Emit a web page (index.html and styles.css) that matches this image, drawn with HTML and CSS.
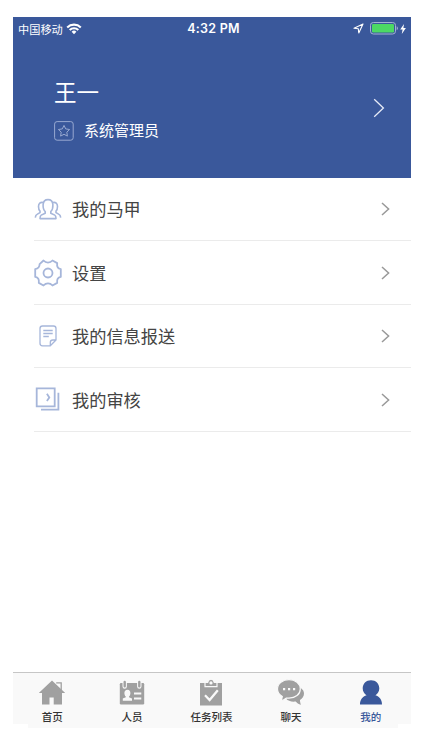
FILE: index.html
```html
<!DOCTYPE html>
<html lang="zh-CN">
<head>
<meta charset="utf-8">
<title>我的</title>
<link rel="stylesheet" href="styles.css">
</head>
<body>
<div class="phone">
	<div class="header">
		<div class="status">
			<div class="carrier">
				<span>中国移动</span>
				<svg class="wifi" width="16" height="12" viewBox="0 0 16 12" fill="none" stroke="#fff" stroke-width="2.1">
					<path d="M1.2 4.4a9.7 9.7 0 0 1 13.6 0M3.7 7a6.1 6.1 0 0 1 8.6 0"/>
					<path d="M8 11.2L5.6 8.8a3.4 3.4 0 0 1 4.8 0z" fill="#fff" stroke="none"/>
				</svg>
			</div>
			<div class="time">4:32 PM</div>
			<div class="power">
				<svg width="11" height="11" viewBox="0 0 11 11" fill="none" stroke="#fff" stroke-width="1.1" stroke-linejoin="round"><path d="M10 1L1 5.2l4.3.5.5 4.3z"/></svg>
				<svg class="battery" width="28" height="13" viewBox="0 0 28 13">
					<rect x=".5" y=".5" width="25" height="11.5" rx="2.8" fill="none" stroke="#a3b1d2"/>
					<rect x="2" y="2" width="22" height="8.5" rx="1.3" fill="#4cd964"/>
					<path d="M26.7 4.3q1.2.5 1.2 2t-1.2 2z" fill="#a3b1d2"/>
				</svg>
				<svg class="bolt" width="6" height="10" viewBox="0 0 6 10"><path d="M4 0L.2 5.6h2.4L1.8 10 5.9 4H3.4z" fill="#fff"/></svg>
			</div>
		</div>
		<div class="user">
			<div>
				<div class="name">王一</div>
				<div class="role">
					<svg width="20" height="20" viewBox="0 0 20 20" fill="none" stroke="#98a9d1" stroke-linejoin="round">
						<rect x=".6" y=".6" width="18.6" height="18.6" rx="2.5"/>
						<path d="M10 4.4l1.7 3.5 3.9.6-2.8 2.7.6 3.9-3.4-1.8-3.4 1.8.6-3.9-2.8-2.7 3.9-.6z"/>
					</svg>
					<span>系统管理员</span>
				</div>
			</div>
			<svg class="more" width="12" height="20" viewBox="0 0 12 20" fill="none" stroke="#e6ebf7" stroke-width="1.3"><path d="M1.2 1.2l9.2 8.8-9.2 8.8"/></svg>
		</div>
	</div>

	<ul class="menu">
		<li>
			<svg class="icon" width="28" height="28" viewBox="0 0 28 28" fill="none" stroke="#a6b6da" stroke-width="1.6" stroke-linejoin="round">
				<path d="M11.200 16.500C9.300 14.800 9 12 9.100 9.600 9.300 6.400 11 4.600 14 4.600s4.700 1.800 4.900 5c.1 2.400-.2 5.200-2.100 6.900v1.700l4 1.900c1 .5 1.200 1.600 1.200 3.500H6c0-1.900.2-3 1.200-3.500l4-1.900z"/>
				<path d="M9.300 7.600C6.300 6.800 4.500 8.700 4.500 11.500c0 2 .3 3.400 1.500 4.600v1.500l-2.600 1.500q-1.900.9-2.100 3.500M18.700 7.600c3-.8 4.800 1.100 4.800 3.900 0 2-.3 3.400-1.500 4.600v1.500l2.600 1.500q1.900.9 2.100 3.500"/>
			</svg>
			<span>我的马甲</span>
			<svg class="arrow" width="9" height="14" viewBox="0 0 9 14"><path d="M1 1l6.600 6L1 13"/></svg>
		</li>
		<li>
			<svg class="icon" width="28" height="28" viewBox="0 0 28 28" fill="none" stroke="#a6b6da" stroke-width="1.8" stroke-linejoin="round">
				<path d="M5.600 5.200L9.500 1.500Q11.400 3.600 14 3.600t4.500-2.100l4.700 2.600q-.8 5.200 3.600 6v7.800q-4.400.8-3.600 6l-4.700 2.600Q16.600 24.400 14 24.400t-4.500 2.100l-4.700-2.600q.8-5.200-3.600-6v-7.800q4.400-.8 4.400-4.900z"/>
				<circle cx="14" cy="14" r="4.500"/>
			</svg>
			<span>设置</span>
			<svg class="arrow" width="9" height="14" viewBox="0 0 9 14"><path d="M1 1l6.600 6L1 13"/></svg>
		</li>
		<li>
			<svg class="icon" width="28" height="28" viewBox="0 0 28 28" fill="none" stroke="#a6b6da" stroke-width="1.300" stroke-linejoin="round">
				<path d="M22 18V6.500Q22 4 19.500 4h-11Q6 4 6 6.500v14.800q0 2.500 2.500 2.500h7.800zM22 18h-3.200q-2.500 0-2.500 2.500v3.300M9.300 8.500h9.400M9.300 11.500h9.400M9.300 14.500h5.500"/>
			</svg>
			<span>我的信息报送</span>
			<svg class="arrow" width="9" height="14" viewBox="0 0 9 14"><path d="M1 1l6.600 6L1 13"/></svg>
		</li>
		<li>
			<svg class="icon" width="28" height="28" viewBox="0 0 28 28" fill="none" stroke="#a6b6da" stroke-width="1.800">
				<path d="M2.700 2.400h18v17.900h-18zM24.400 6.700v17H7M12.900 7.800l2.400 3.600-2.400 3.700"/>
			</svg>
			<span>我的审核</span>
			<svg class="arrow" width="9" height="14" viewBox="0 0 9 14"><path d="M1 1l6.600 6L1 13"/></svg>
		</li>
	</ul>

	<div class="tabs">
		<div class="tab">
			<svg width="28" height="28" viewBox="0 0 28 28" fill="#a0a0a0">
				<path d="M14 1.500L.8 14H4v11.500h7.500v-7h4.200v7H24V14h3.200z"/>
				<path d="M18.200 3.800h5v7.500" fill="none" stroke="#a0a0a0" stroke-width="1.300"/>
			</svg>
			<span>首页</span>
		</div>
		<div class="tab">
			<svg width="28" height="28" viewBox="0 0 28 28">
				<rect x="1.800" y="4" width="24.400" height="21.500" rx="1.200" fill="#a0a0a0"/>
				<path d="M6.700 2.500v5M21.300 2.500v5" stroke="#f9f9f9" stroke-width="4.400" stroke-linecap="round"/>
				<path d="M6.700 3v4.300M21.300 3v4.300" stroke="#a0a0a0" stroke-width="2.400" stroke-linecap="round"/>
				<path d="M9.500 10.800c2 0 2.900 1.400 2.900 3.200 0 1.600-.5 2.800-1.400 3.500v.8l3 1.200v2.300H4.800v-2.300l3-1.200v-.8c-.9-.7-1.400-1.900-1.400-3.500 0-1.800 1.100-3.200 3.100-3.200z" fill="#f9f9f9"/>
				<path d="M16 14.500h7.300M16 19.500h7.300" stroke="#f9f9f9" stroke-width="2"/>
			</svg>
			<span>人员</span>
		</div>
		<div class="tab">
			<svg width="28" height="28" viewBox="0 0 28 28">
				<path d="M3 4h22v22.500H3z" fill="#a0a0a0"/>
				<path d="M8 7.700V3.500h2.700Q11.300.2 14 .2t3.300 3.300H20v4.200z" fill="#a0a0a0" stroke="#f9f9f9" stroke-width="1.200"/>
				<circle cx="14" cy="3.900" r="1.600" fill="#f9f9f9"/>
				<path d="M8 16.300l4.600 4.700 8.200-9.800" fill="none" stroke="#f9f9f9" stroke-width="2.300"/>
			</svg>
			<span>任务列表</span>
		</div>
		<div class="tab">
			<svg width="28" height="28" viewBox="0 0 28 28">
				<path d="M15 7.500c7-.5 12 2.200 12 7 0 3-1.600 5-4 6.500 0 2 .4 3.300 1 4.800-2.600-.6-4-1.600-5.300-3.200-4.300.4-7.700-.4-9.700-3z" fill="#a0a0a0"/>
				<path d="M12 .6c6.300 0 11.300 3.900 11.300 9.300s-5 9.300-11.300 9.300l-2.500-.2c-1.600 1.600-3.600 2.500-6.200 2.900 1.300-1.300 1.900-2.700 2-4.500C2.400 15.700.5 13.200.5 9.900.5 4.500 5.700.6 12 .6z" fill="#a0a0a0" stroke="#f9f9f9" stroke-width="1.200"/>
				<path d="M6 9h2.200v2.200H6zM11 9h2.200v2.200H11zM16 9h2.200v2.200H16z" fill="#f9f9f9"/>
			</svg>
			<span>聊天</span>
		</div>
		<div class="tab active">
			<svg width="28" height="28" viewBox="0 0 28 28" fill="#3a589b">
				<path d="M14 1.200c4.900 0 8.300 3.500 8.300 8.100 0 3.100-1.500 5.400-3.900 6.900 4 1.300 6.600 4.200 6.600 9.300H3c0-5.100 2.600-8 6.600-9.300-2.400-1.500-3.900-3.800-3.900-6.900 0-4.600 3.400-8.100 8.300-8.100z"/>
			</svg>
			<span>我的</span>
		</div>
	</div>
</div>
</body>
</html>
```
FILE: styles.css
```css
*{ margin:0; padding:0; box-sizing:border-box;}
body{ background:#fff; font-family:"Liberation Sans","Noto Sans CJK SC",sans-serif;}
li{ list-style:none;}
svg{ display:block; flex:none;}
.phone{ width:398px; height:711px; margin:17px 0 0 13px; display:flex; flex-direction:column;}

.header{ height:160.5px; background:#3a589b; color:#fff;}
.status{ height:23px; padding:0 5px; display:grid; grid-template-columns:1fr auto 1fr; align-items:center;}
.carrier{ display:flex; align-items:center; font-size:11.2px; line-height:16px;}
.carrier span{ padding-top:3px;}
.wifi{ margin-left:3px;}
.time{ font:600 12.5px/16px Inter,sans-serif; letter-spacing:.25px; padding-left:3px;}
.power{ display:flex; align-items:center; justify-content:flex-end;}
.battery{ margin-left:6px;}
.bolt{ margin-left:2px;}
.user{ padding:38px 26px 0 41px; display:flex; justify-content:space-between;}
.name{ font-size:22.5px; line-height:32px; font-weight:400;}
.role{ margin-top:9px; display:flex; align-items:center; font-size:15px; line-height:22px;}
.role span{ margin-left:10px; padding-top:1px;}
.more{ margin-top:20px;}

.menu{ padding-left:21px;}
.menu li{ height:63.6px; padding-top:1px; border-bottom:1px solid #ebebeb; display:flex; align-items:center; font-size:17.2px; color:#444;}
.menu span{ margin-left:10px; flex:1; padding-bottom:1px;}
.arrow{ margin-right:21px; fill:none; stroke:#999; stroke-width:1.5;}

.tabs{ height:56px; margin-top:auto; background:#f9f9f9; border-top:1px solid #c6c6c6; display:flex; clip-path:polygon(0 0,100% 0,100% 52px,385px 52px,385px 100%,15px 100%,15px 52px,0 52px);}
.tab{ flex:1; padding:6px 1px 0 0; display:flex; flex-direction:column; align-items:center; font-size:10.5px; line-height:16px; font-weight:500; color:#333;}
.tab span{ margin-top:2px;}
.active{ color:#3a589b;}
```
